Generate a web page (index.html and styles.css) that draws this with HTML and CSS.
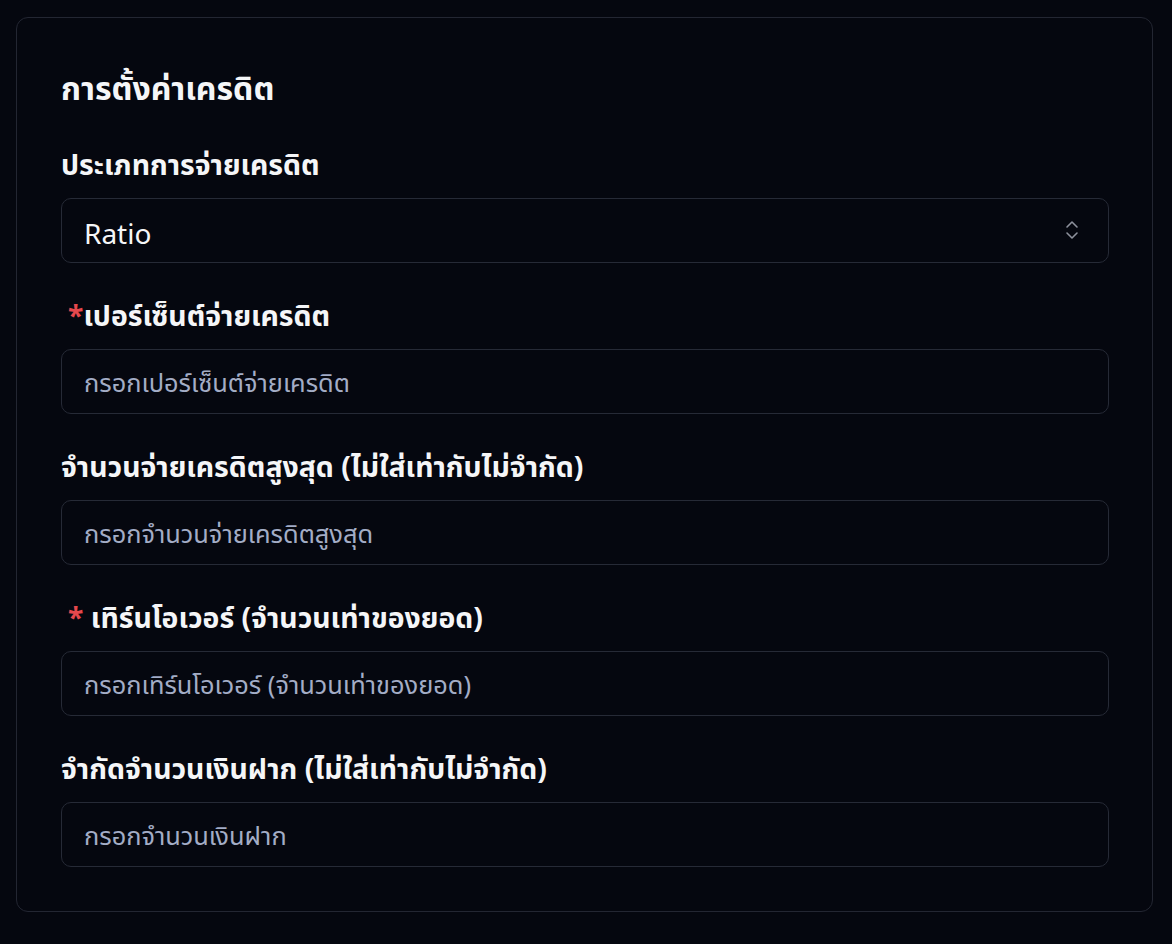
FILE: index.html
```html
<!DOCTYPE html>
<html>
<head>
  <title>Credit Settings</title>
  <link rel="stylesheet" href="styles.css">
</head>
<body>
  <div class="card">
    <h2 class="card-title">การตั้งค่าเครดิต</h2>

    <div class="form-group">
      <label for="credit-type">ประเภทการจ่ายเครดิต</label>
      <div class="select-wrap">
        <select id="credit-type">
          <option>Ratio</option>
          <option>Fixed</option>
        </select>
        <svg class="select-icon" width="24" height="24" viewBox="0 0 24 24" fill="none" stroke="currentColor" stroke-width="1.6" stroke-linecap="round" stroke-linejoin="round">
          <path d="m7 15 5 5 5-5"/>
          <path d="m7 9 5-5 5 5"/>
        </svg>
      </div>
    </div>

    <div class="form-group">
      <label for="credit-percent"><span class="required">*</span>เปอร์เซ็นต์จ่ายเครดิต</label>
      <input type="text" id="credit-percent" placeholder="กรอกเปอร์เซ็นต์จ่ายเครดิต">
    </div>

    <div class="form-group">
      <label for="credit-max">จำนวนจ่ายเครดิตสูงสุด (ไม่ใส่เท่ากับไม่จำกัด)</label>
      <input type="text" id="credit-max" placeholder="กรอกจำนวนจ่ายเครดิตสูงสุด">
    </div>

    <div class="form-group">
      <label for="turnover"><span class="required">*</span> เทิร์นโอเวอร์ (จำนวนเท่าของยอด)</label>
      <input type="text" id="turnover" placeholder="กรอกเทิร์นโอเวอร์ (จำนวนเท่าของยอด)">
    </div>

    <div class="form-group">
      <label for="deposit-limit">จำกัดจำนวนเงินฝาก (ไม่ใส่เท่ากับไม่จำกัด)</label>
      <input type="text" id="deposit-limit" placeholder="กรอกจำนวนเงินฝาก">
    </div>
  </div>
</body>
</html>
```

FILE: styles.css
```css
body {
  margin: 0;
  padding: 17px 19px 32px 16px;
  background-color: #05070f;
  color: #f5f6f8;
  font-family: "Noto Sans", "Noto Sans Thai", sans-serif;
}
.card {
  border: 1px solid #232632;
  border-radius: 12px;
  padding: 50px 43px 44px 44px;
  display: flex;
  flex-direction: column;
  gap: 36px;
}
.card-title {
  margin: 0 0 4px 0;
  font-size: 32px;
  line-height: 40px;
  font-weight: 700;
}
.form-group {
  display: flex;
  flex-direction: column;
  gap: 18px;
}
label {
  font-size: 28.4px;
  line-height: 32px;
  font-weight: 700;
}
.required {
  color: #e5484d;
  margin-left: 7px;
}
input,
select {
  box-sizing: border-box;
  width: 100%;
  height: 65px;
  padding: 0 22px;
  border: 1px solid #262a36;
  border-radius: 10px;
  background-color: #05070f;
  color: #f5f6f8;
  font-family: inherit;
  font-size: 25.4px;
  outline: none;
}
input::placeholder {
  color: #a3adc6;
}
.select-wrap {
  position: relative;
}
select {
  appearance: none;
  padding-top: 4px;
  font-size: 28px;
  cursor: pointer;
}
.select-icon {
  position: absolute;
  right: 25px;
  top: 20px;
  color: #8d919c;
  pointer-events: none;
}
```
